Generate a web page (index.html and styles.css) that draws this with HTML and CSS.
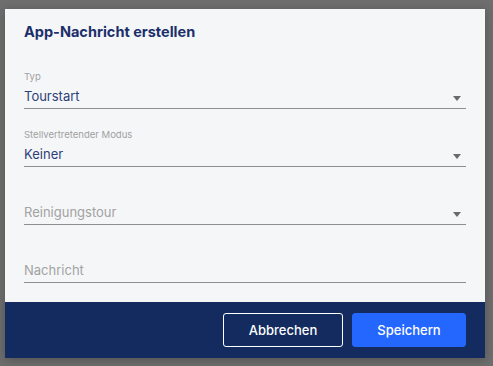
FILE: index.html
```html
<!DOCTYPE html>
<html lang="de">
<head>
<meta charset="utf-8">
<title>App-Nachricht erstellen</title>
<link rel="stylesheet" href="styles.css">
</head>
<body>
<div class="dialog">
  <div class="content">
    <h1 class="title">App-Nachricht erstellen</h1>
    <div class="field">
      <div class="label">Typ</div>
      <div class="value-row"><span class="value">Tourstart</span><span class="arrow"></span></div>
    </div>
    <div class="field">
      <div class="label">Stellvertretender Modus</div>
      <div class="value-row"><span class="value">Keiner</span><span class="arrow"></span></div>
    </div>
    <div class="field">
      <div class="value-row"><span class="value placeholder">Reinigungstour</span><span class="arrow"></span></div>
    </div>
    <div class="field">
      <div class="value-row"><span class="value placeholder">Nachricht</span></div>
    </div>
  </div>
  <div class="footer">
    <button class="btn btn-outline">Abbrechen</button>
    <button class="btn btn-primary">Speichern</button>
  </div>
</div>
</body>
</html>
```
FILE: styles.css
```css
html, body {
  margin: 0;
  padding: 0;
}
body {
  background: #6e6e6e;
  width: 493px;
  height: 366px;
  padding: 9px 0 0 5px;
  box-sizing: border-box;
  font-family: Inter, "Noto Sans", sans-serif;
  overflow: hidden;
}
.dialog {
  width: 480px;
  height: 349px;
  background: #f5f6f8;
  display: flex;
  flex-direction: column;
  box-shadow: 0 2px 10px rgba(0,0,0,0.25);
}
.content {
  flex: 1;
  padding: 14px 19px 0 19px;
}
.title {
  margin: 0 0 11px 0;
  font-size: 14.5px;
  line-height: 17px;
  font-weight: 700;
  color: #1b2f6b;
}
.field {
  height: 58px;
  box-sizing: border-box;
  border-bottom: 1px solid #8e8e8e;
  display: flex;
  flex-direction: column;
  justify-content: flex-end;
  padding-bottom: 2px;
}
.label {
  font-size: 9.5px;
  line-height: 12px;
  color: #a0a0a0;
  margin-bottom: 3px;
}
.value-row {
  display: flex;
  justify-content: space-between;
  align-items: center;
  height: 20px;
}
.value {
  font-size: 13px;
  line-height: 20px;
  color: #2d3f78;
}
.value.placeholder {
  color: #a2a2a2;
}
.arrow {
  width: 0;
  height: 0;
  border-left: 4.5px solid transparent;
  border-right: 4.5px solid transparent;
  border-top: 5px solid #6a6a6a;
  margin-right: 5px;
  margin-top: 5px;
}
.footer {
  height: 56px;
  background: #142b5f;
  display: flex;
  justify-content: flex-end;
  align-items: center;
  gap: 9px;
  padding: 0 19px;
  box-sizing: border-box;
}
.btn {
  height: 34px;
  border-radius: 3px;
  font-family: Inter, "Noto Sans", sans-serif;
  font-size: 13px;
  font-weight: 500;
  color: #ffffff;
  cursor: pointer;
  padding: 0;
}
.btn-outline {
  width: 120px;
  background: transparent;
  border: 1px solid #ffffff;
}
.btn-primary {
  width: 114px;
  background: #2467ff;
  border: 1px solid #2467ff;
}
```
